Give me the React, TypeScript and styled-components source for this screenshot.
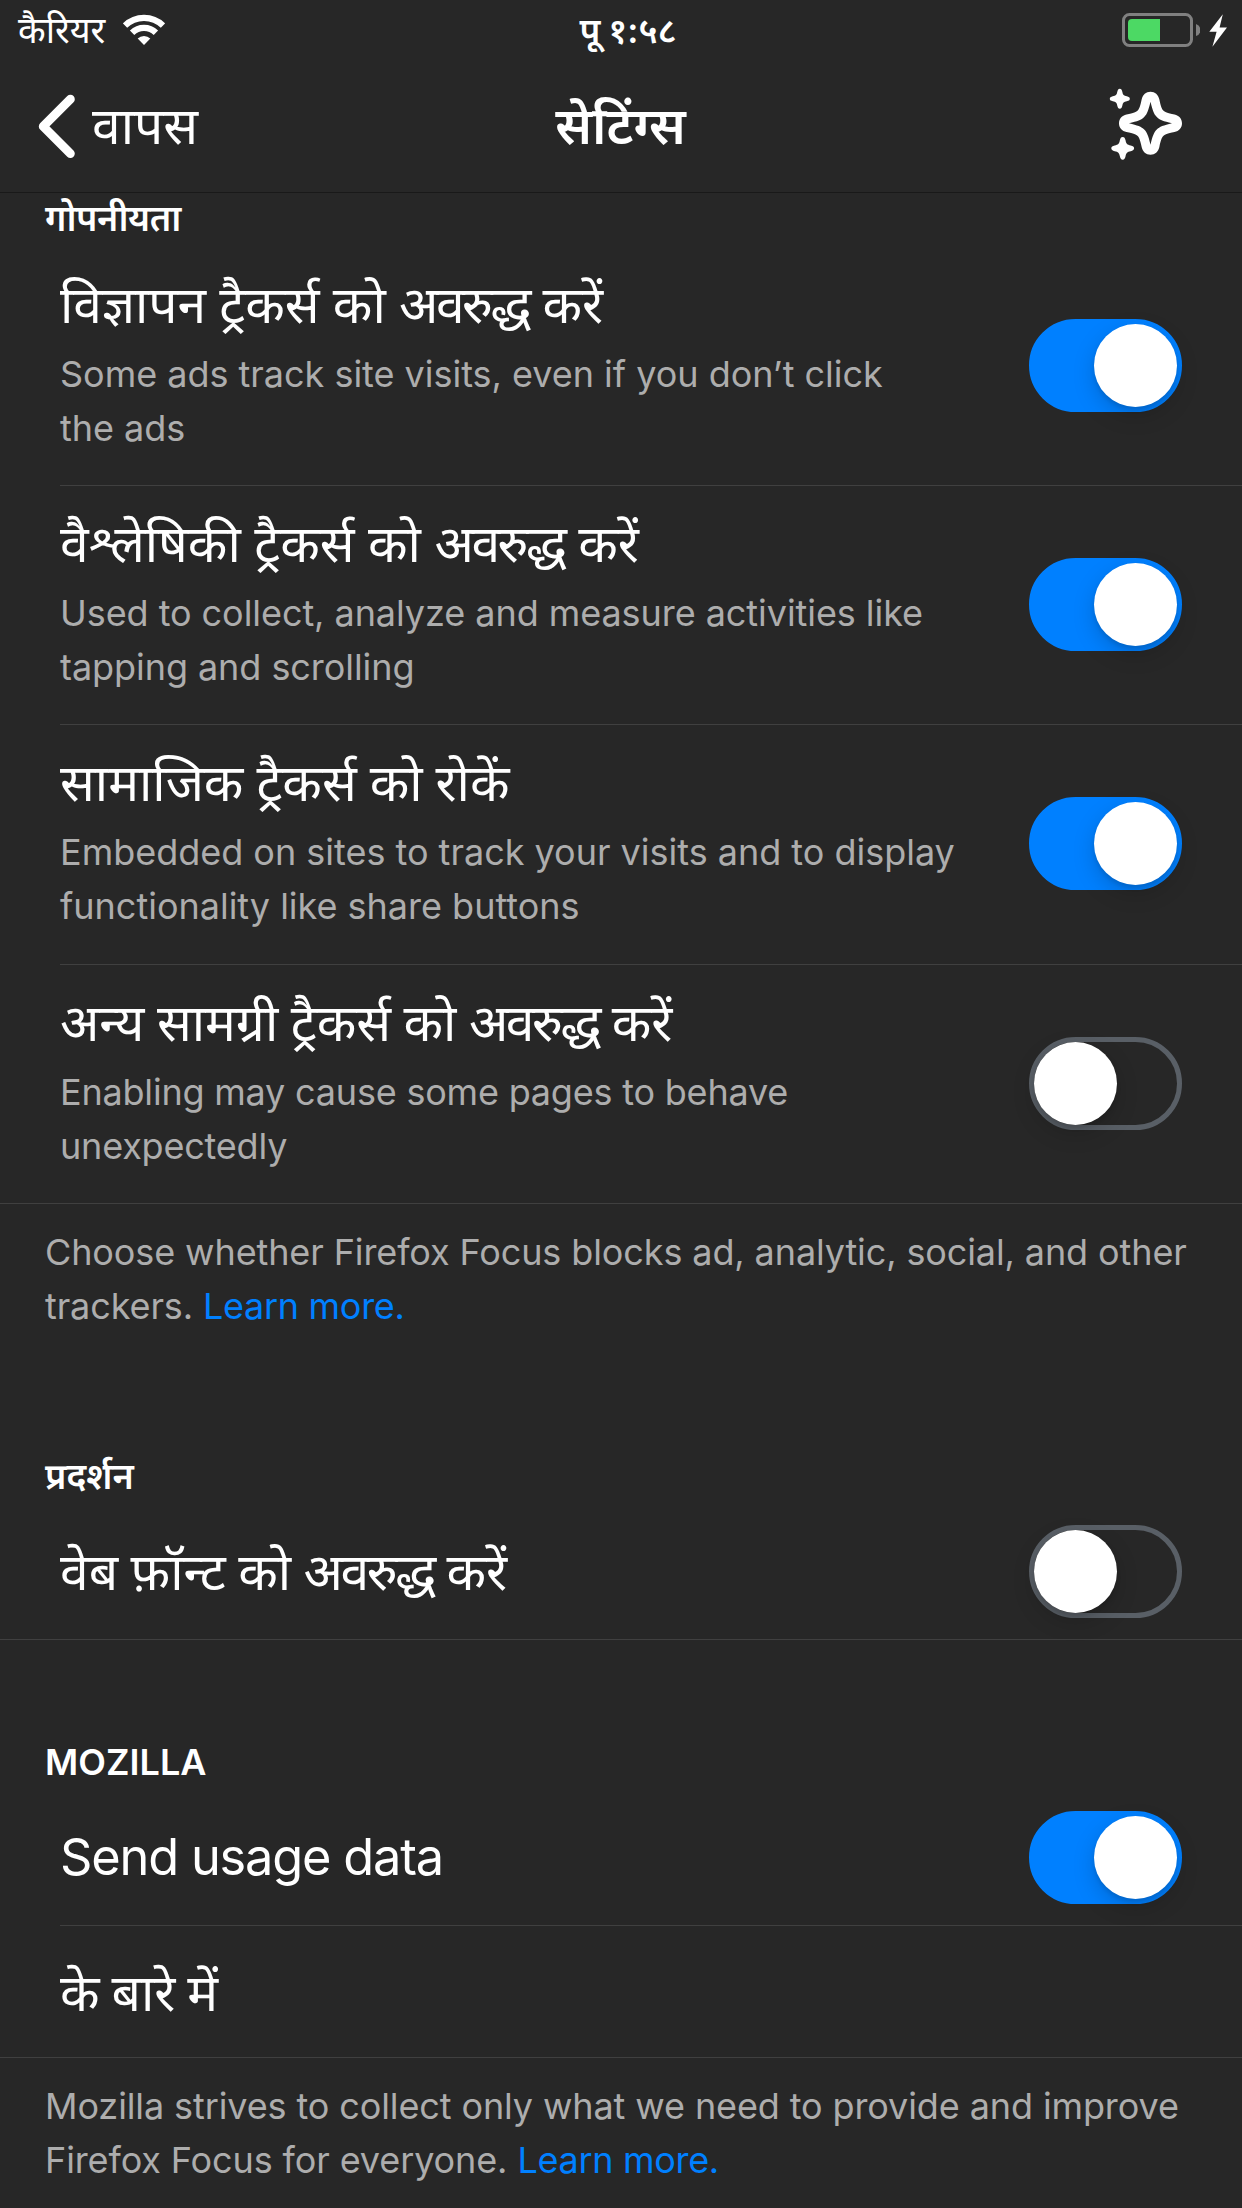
import React, { useState } from "react";
import styled, { createGlobalStyle } from "styled-components";

const GlobalStyle = createGlobalStyle`
  *, *::before, *::after { box-sizing: border-box; }
  html, body { margin: 0; background: #272727; }
  body {
    font-family: Inter, "Noto Sans", "Noto Sans Devanagari", sans-serif;
    color: #fff;
  }
`;

const Screen = styled.div`
  width: 1242px;
  height: 2208px;
  overflow: hidden;
  display: flex;
  flex-direction: column;
  background: #272727;
`;

const Header = styled.header`
  flex: none;
  height: 193px;
  border-bottom: 1px solid #191919;
`;

const StatusBar = styled.div`
  display: grid;
  grid-template-columns: 1fr auto 1fr;
  height: 60px;
  padding: 0 14px 0 18px;
  font-size: 36px;
  line-height: 61px;
`;

const Carrier = styled.div`
  display: flex;
  gap: 18px;
  white-space: nowrap;
`;

const WifiIcon = styled.svg`
  width: 42px;
  height: 32px;
  margin-top: 14px;
`;

const Clock = styled.div`
  margin-left: 10px;
  font-size: 35px;
  font-weight: 600;
  word-spacing: -1px;
  line-height: 61px;
`;

const Power = styled.div`
  display: flex;
  justify-content: flex-end;
  gap: 9px;
  padding-top: 13px;
`;

const BatteryIcon = styled.svg`
  width: 78px;
  height: 34px;
`;

const BoltIcon = styled.svg`
  width: 19px;
  height: 34px;
`;

const NavBar = styled.nav`
  display: grid;
  grid-template-columns: 1fr auto 1fr;
  height: 132px;
  padding: 0 58px 0 37px;
  font-size: 51.5px;
  line-height: 130px;
`;

const BackButton = styled.button`
  display: flex;
  gap: 15px;
  padding: 0;
  border: 0;
  background: none;
  color: inherit;
  font: inherit;
  line-height: 130px;
`;

const ChevronIcon = styled.svg`
  width: 40px;
  height: 64px;
  margin-top: 34px;
`;

const NavTitle = styled.h1`
  margin: 0 0 0 20px;
  font: inherit;
  font-weight: 600;
`;

const TipsButton = styled.button`
  justify-self: end;
  align-self: start;
  padding: 0;
  margin: 26px 0 0;
  border: 0;
  background: none;
  line-height: 0;
`;

const SparkleIcon = styled.svg`
  width: 76px;
  height: 76px;
`;

const Section = styled.section<{ $gap: number }>`
  flex: none;
  margin-top: ${(p) => p.$gap}px;
`;

const SectionTitle = styled.h2<{ $tracking?: number }>`
  margin: 0;
  padding: 0 45px 7px;
  font-size: 36px;
  font-weight: 600;
  line-height: 44px;
  letter-spacing: ${(p) => p.$tracking ?? 0}px;
`;

const Row = styled.div<{ $height: number; $last?: boolean }>`
  display: flex;
  justify-content: space-between;
  height: ${(p) => p.$height}px;
  margin-left: ${(p) => (p.$last ? 0 : 60)}px;
  padding: 0 60px 0 ${(p) => (p.$last ? 60 : 0)}px;
  border-bottom: 1px solid #404040;
`;

const RowText = styled.div<{ $top: number }>`
  display: flex;
  flex-direction: column;
  gap: 13px;
  padding-top: ${(p) => p.$top}px;
  white-space: nowrap;
`;

const RowTitle = styled.div<{ $space?: number }>`
  height: 60px;
  font-size: 51.5px;
  line-height: 60px;
  word-spacing: ${(p) => p.$space ?? 0}px;

  &:lang(en) {
    font-size: 50.5px;
    letter-spacing: -1.18px;
  }
`;

const TightWord = styled.span`
  letter-spacing: -2.4px;
`;

const RowDetail = styled.div<{ $tracking: number }>`
  font-size: 36px;
  line-height: 54px;
  letter-spacing: ${(p) => p.$tracking}px;
  color: #adadad;
  white-space: pre-line;
`;

const Track = styled.button<{ $on: boolean; $top: number }>`
  flex: none;
  display: flex;
  justify-content: ${(p) => (p.$on ? "flex-end" : "flex-start")};
  width: 153px;
  height: 93px;
  margin-top: ${(p) => p.$top}px;
  padding: 0;
  border: 5px solid ${(p) => (p.$on ? "#0080ff" : "#595f66")};
  border-radius: 47px;
  background: ${(p) => (p.$on ? "#0080ff" : "#272727")};
`;

const Knob = styled.span`
  width: 83px;
  height: 83px;
  border-radius: 50%;
  background: #fff;
  box-shadow: 0 8px 22px rgba(0, 0, 0, 0.17), 0 3px 4px rgba(0, 0, 0, 0.1);
`;

const Footnote = styled.p`
  margin: 0;
  padding: 21px 45px 0;
  font-size: 36px;
  line-height: 54px;
  letter-spacing: -0.11px;
  color: #adadad;
  white-space: pre-line;
`;

const Link = styled.a`
  color: #0080ff;
  letter-spacing: -0.3px;
  text-decoration: none;
`;

function Toggle({ initial, top }: { initial: boolean; top: number }) {
  const [on, setOn] = useState(initial);
  return (
    <Track role="switch" aria-checked={on} $on={on} $top={top} onClick={() => setOn(!on)}>
      <Knob />
    </Track>
  );
}

const trackers = [
  {
    title: ["विज्ञापन ट्रैकर्स को ", "अवरुद्ध", " करें"],
    detail: "Some ads track site visits, even if you don’t click\nthe ads",
    tracking: -0.02,
    on: true,
    height: 239,
    space: -1.3,
  },
  {
    title: ["वैश्लेषिकी ट्रैकर्स को ", "अवरुद्ध", " करें"],
    detail: "Used to collect, analyze and measure activities like\ntapping and scrolling",
    tracking: -0.06,
    on: true,
    height: 239,
    space: -1,
  },
  {
    title: ["सामाजिक ट्रैकर्स को रोकें"],
    detail: "Embedded on sites to track your visits and to display\nfunctionality like share buttons",
    tracking: -0.01,
    on: true,
    height: 240,
    space: -1.5,
  },
  {
    title: ["अन्य सामग्री ट्रैकर्स को ", "अवरुद्ध", " करें"],
    detail: "Enabling may cause some pages to behave\nunexpectedly",
    tracking: -0.2,
    on: false,
    height: 239,
    space: -2,
  },
];

const smallStar =
  "M0-10C1.5-10 2-9 2.5-7C3-4 4-3 7-2.5C9-2 10-1.5 10 0C10 1.5 9 2 7 2.5C4 3 3 4 2.5 7C2 9 1.5 10 0 10C-1.5 10-2 9-2.5 7C-3 4-4 3-7 2.5C-9 2-10 1.5-10 0C-10-1.5-9-2-7-2.5C-4-3-3-4-2.5-7C-2-9-1.5-10 0-10Z";

const bigStar =
  "M0-31.5C4.5-31.5 7.8-28.5 8.8-24C10.3-16.5 11.5-14 12.8-12.8C14.2-11.5 16.7-10.3 24-8.8C28.5-7.8 31.5-4.5 31.5 0C31.5 4.5 28.5 7.8 24 8.8C16.7 10.3 14.2 11.5 12.8 12.8C11.5 14 10.3 16.5 8.8 24C7.8 28.5 4.5 31.5 0 31.5C-4.5 31.5-7.8 28.5-8.8 24C-10.3 16.5-11.5 14-12.8 12.8C-14.2 11.5-16.7 10.3-24 8.8C-28.5 7.8-31.5 4.5-31.5 0C-31.5-4.5-28.5-7.8-24-8.8C-16.7-10.3-14.2-11.5-12.8-12.8C-11.5-14-10.3-16.5-8.8-24C-7.8-28.5-4.5-31.5 0-31.5Z" +
  "M0-21.5C2-13 3.5-9 6.3-6.3C9-3.5 13-2 21.5 0C13 2 9 3.5 6.3 6.3C3.5 9 2 13 0 21.5C-2 13-3.5 9-6.3 6.3C-9 3.5-13 2-21.5 0C-13-2-9-3.5-6.3-6.3C-3.5-9-2-13 0-21.5Z";

export default function App() {
  return (
    <>
      <GlobalStyle />
      <Screen lang="hi">
        <Header>
          <StatusBar>
            <Carrier>
              कैरियर
              <WifiIcon viewBox="0 0 42 32" fill="none" stroke="#fff" strokeWidth="6.2">
                <path d="M2 11.6A27 27 0 0 1 40 11.6" />
                <path d="M9.1 18.7A16.9 16.9 0 0 1 32.9 18.7" />
                <path d="M21 31L14.7 24.6A9 9 0 0 1 27.3 24.6Z" fill="#fff" stroke="none" />
              </WifiIcon>
            </Carrier>
            <Clock>पू १:५८</Clock>
            <Power>
              <BatteryIcon viewBox="0 0 78 34" fill="none">
                <rect x="1.5" y="1.5" width="68" height="31" rx="6" stroke="#808080" strokeWidth="3" />
                <path d="M10 6H38V28H10A4 4 0 0 1 6 24V10A4 4 0 0 1 10 6Z" fill="#4cd964" />
                <path d="M74 11A6.3 6.3 0 0 1 74 23Z" fill="#808080" />
              </BatteryIcon>
              <BoltIcon viewBox="0 0 19 34">
                <path d="M13.8 1.3L0.3 18.8H7.6L3.4 33.8L18 14.6H10.6Z" fill="#fff" />
              </BoltIcon>
            </Power>
          </StatusBar>
          <NavBar>
            <BackButton>
              <ChevronIcon viewBox="0 0 40 64">
                <path
                  d="M33.4 5.2L6.2 32.4L33.4 59.6"
                  fill="none"
                  stroke="#fff"
                  strokeWidth="8.8"
                  strokeLinecap="round"
                  strokeLinejoin="round"
                />
              </ChevronIcon>
              वापस
            </BackButton>
            <NavTitle>सेटिंग्स</NavTitle>
            <TipsButton aria-label="Tips">
              <SparkleIcon viewBox="0 0 76 76" fill="#fff">
                <path transform="translate(42.5 37.3)" fillRule="evenodd" d={bigStar} />
                <path transform="translate(11.8 12.7)" d={smallStar} />
                <path transform="translate(14.7 62.3) scale(1.14)" d={smallStar} />
              </SparkleIcon>
            </TipsButton>
          </NavBar>
        </Header>

        <Section $gap={3}>
          <SectionTitle $tracking={-0.5}>गोपनीयता</SectionTitle>
          {trackers.map((t, i) => (
            <Row key={t.detail} $height={t.height} $last={i === trackers.length - 1}>
              <RowText $top={27}>
                <RowTitle $space={t.space}>
                  {t.title[0]}
                  <TightWord>{t.title[1]}</TightWord>
                  {t.title[2]}
                </RowTitle>
                <RowDetail $tracking={t.tracking}>{t.detail}</RowDetail>
              </RowText>
              <Toggle initial={t.on} top={72} />
            </Row>
          ))}
          <Footnote>
            {"Choose whether Firefox Focus blocks ad, analytic, social, and other\ntrackers. "}
            <Link>Learn more.</Link>
          </Footnote>
        </Section>

        <Section $gap={121}>
          <SectionTitle>प्रदर्शन</SectionTitle>
          <Row $height={135} $last>
            <RowText $top={36}>
              <RowTitle $space={-2}>
                वेब फ़ॉन्ट को <TightWord>अवरुद्ध</TightWord> करें
              </RowTitle>
            </RowText>
            <Toggle initial={false} top={20} />
          </Row>
        </Section>

        <Section $gap={100}>
          <SectionTitle $tracking={0.05}>MOZILLA</SectionTitle>
          <Row $height={135}>
            <RowText $top={36}>
              <RowTitle lang="en">Send usage data</RowTitle>
            </RowText>
            <Toggle initial top={20} />
          </Row>
          <Row $height={132} $last>
            <RowText $top={36}>
              <RowTitle $space={-2.5}>के बारे में</RowTitle>
            </RowText>
          </Row>
          <Footnote>
            {"Mozilla strives to collect only what we need to provide and improve\nFirefox Focus for everyone. "}
            <Link>Learn more.</Link>
          </Footnote>
        </Section>
      </Screen>
    </>
  );
}
